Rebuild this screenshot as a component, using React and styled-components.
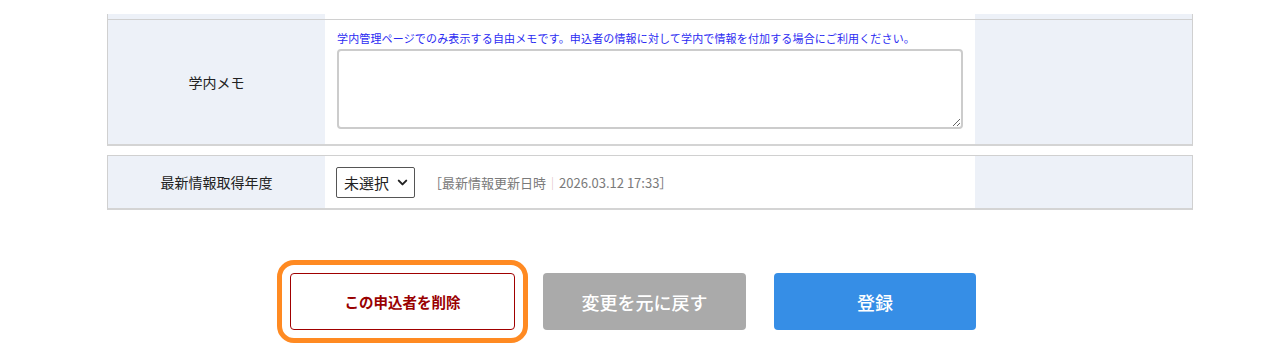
import React from 'react';
import styled, { createGlobalStyle } from 'styled-components';
import { ChevronDown } from 'lucide-react';

const GlobalStyle = createGlobalStyle`
  body {
    margin: 0;
    background: #fff;
    font-family: "Noto Sans CJK JP", "Noto Sans", sans-serif;
    color: #222;
  }
`;

const Page = styled.div`
  padding: 14px 0 30px 107px;
`;

const Table = styled.div`
  width: 1086px;
  box-sizing: border-box;
  border-left: 1px solid #d0d0d0;
  border-right: 1px solid #d0d0d0;
  border-bottom: 2px solid #d4d4d4;
  margin-top: ${p => p.$top || 0}px;
`;

const Row = styled.div`
  display: grid;
  grid-template-columns: 217px 650px 217px;
  border-top: ${p => (p.$noBorder ? 'none' : '1px solid #d0d0d0')};
  height: ${p => p.$h}px;
`;

const Label = styled.div`
  background: #edf1f8;
  display: flex;
  align-items: center;
  justify-content: center;
  font-size: 14px;
  color: #222;
`;

const Cell = styled.div`
  background: #fff;
  padding: ${p => p.$pad || '0 12px'};
  display: flex;
  flex-direction: ${p => (p.$column ? 'column' : 'row')};
  align-items: ${p => (p.$column ? 'stretch' : 'center')};
`;

const Side = styled.div`
  background: #edf1f8;
`;

const Note = styled.div`
  font-size: 11px;
  letter-spacing: 0.15px;
  color: #2b2bf2;
  line-height: 17px;
  margin-bottom: 2px;
  white-space: nowrap;
`;

const Memo = styled.textarea`
  display: block;
  width: 100%;
  height: 80px;
  box-sizing: border-box;
  border: 2px solid #cccccc;
  border-radius: 4px;
  resize: both;
  font-family: inherit;
`;

const SelectWrap = styled.div`
  position: relative;
  width: 79px;
  height: 31px;
`;

const Select = styled.select`
  appearance: none;
  width: 100%;
  height: 100%;
  box-sizing: border-box;
  border: 1px solid #555;
  border-radius: 2px;
  background: #fff;
  font-family: inherit;
  font-size: 15px;
  color: #222;
  padding: 0 0 0 7px;
`;

const Chevron = styled(ChevronDown)`
  position: absolute;
  right: 5px;
  top: 8px;
  pointer-events: none;
`;

const Updated = styled.span`
  margin-left: 14px;
  font-size: 13px;
  color: #7a7a7a;
  white-space: nowrap;
`;

const Sep = styled.span`
  color: #e0c0c0;
`;

const Buttons = styled.div`
  display: flex;
  gap: 28px;
  padding-left: 183px;
  margin-top: 63px;
`;

const Button = styled.button`
  height: 57px;
  width: ${p => p.$w}px;
  border-radius: 4px;
  border: none;
  background: ${p => p.$bg};
  color: #fff;
  font-family: inherit;
  font-size: 18px;
  font-weight: 500;
  cursor: pointer;
`;

const DeleteButton = styled(Button)`
  background: #fff;
  border: 1px solid #a00000;
  color: #990000;
  font-size: 14.5px;
  font-weight: bold;
  outline: 5px solid #ff8a22;
  outline-offset: 8px;
`;

export default function App() {
  return (
    <>
      <GlobalStyle />
      <Page>
        <Table>
          <Row $noBorder $h={5}>
            <Label />
            <Cell />
            <Side />
          </Row>
          <Row $h={124}>
            <Label>学内メモ</Label>
            <Cell $column $pad="10px 12px 14px 12px">
              <Note>学内管理ページでのみ表示する自由メモです。申込者の情報に対して学内で情報を付加する場合にご利用ください。</Note>
              <Memo />
            </Cell>
            <Side />
          </Row>
        </Table>
        <Table $top={9}>
          <Row $h={52}>
            <Label>最新情報取得年度</Label>
            <Cell $pad="0 11px">
              <SelectWrap>
                <Select defaultValue="">
                  <option value="">未選択</option>
                </Select>
                <Chevron size={15} strokeWidth={3.2} color="#222" />
              </SelectWrap>
              <Updated>［最新情報更新日時<Sep>｜</Sep>2026.03.12 17:33］</Updated>
            </Cell>
            <Side />
          </Row>
        </Table>
        <Buttons>
          <DeleteButton $w={225}>この申込者を削除</DeleteButton>
          <Button $w={203} $bg="#aaaaaa">変更を元に戻す</Button>
          <Button $w={202} $bg="#368ee6">登録</Button>
        </Buttons>
      </Page>
    </>
  );
}
